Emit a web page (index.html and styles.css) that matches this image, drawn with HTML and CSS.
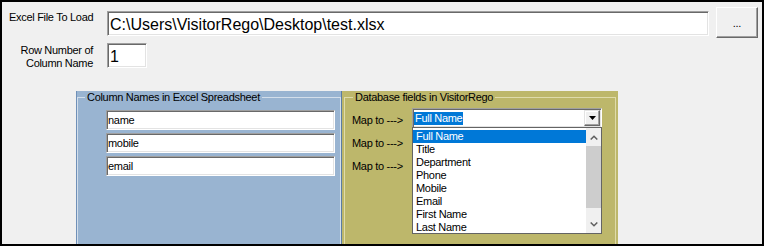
FILE: index.html
```html
<!DOCTYPE html>
<html>
<head>
<meta charset="utf-8">
<link rel="stylesheet" href="styles.css">
</head>
<body>
<div class="win">
  <div class="row row-file">
    <label class="lbl lbl-file">Excel File To Load</label>
    <div class="tb tb-big tb-file">C:\Users\VisitorRego\Desktop\test.xlsx</div>
    <div class="btn">...</div>
  </div>
  <div class="row row-num">
    <label class="lbl lbl-num">Row Number of<br>Column Name</label>
    <div class="tb tb-big tb-num">1</div>
  </div>
  <div class="panels">
    <div class="panel panel-blue">
      <fieldset class="grp grp-blue">
        <legend>Column Names in Excel Spreadsheet</legend>
        <div class="cols">
          <div class="tb tb-col">name</div>
          <div class="tb tb-col">mobile</div>
          <div class="tb tb-col">email</div>
        </div>
      </fieldset>
    </div>
    <div class="panel panel-olive">
      <fieldset class="grp grp-olive">
        <legend>Database fields in VisitorRego</legend>
        <div class="maps">
          <div class="map-row">
            <span class="map-lbl">Map to ---&gt;</span>
            <div class="combo">
              <span class="sel">Full Name</span>
              <span class="ddbtn">
                <svg width="7" height="4" viewBox="0 0 7 4"><polygon points="0,0 7,0 3.5,4" fill="#000"/></svg>
              </span>
              <div class="list">
                <div class="items">
                  <div class="item on">Full Name</div>
                  <div class="item">Title</div>
                  <div class="item">Department</div>
                  <div class="item">Phone</div>
                  <div class="item">Mobile</div>
                  <div class="item">Email</div>
                  <div class="item">First Name</div>
                  <div class="item">Last Name</div>
                </div>
                <div class="sb">
                  <div class="sb-btn sb-up">
                    <svg width="8" height="5" viewBox="0 0 8 5"><polyline points="0.7,4.5 4,1.2 7.3,4.5" fill="none" stroke="#606060" stroke-width="1.5"/></svg>
                  </div>
                  <div class="sb-thumb"></div>
                  <div class="sb-track"></div>
                  <div class="sb-btn sb-dn">
                    <svg width="8" height="5" viewBox="0 0 8 5"><polyline points="0.7,0.5 4,3.8 7.3,0.5" fill="none" stroke="#606060" stroke-width="1.5"/></svg>
                  </div>
                </div>
              </div>
            </div>
          </div>
          <div class="map-row"><span class="map-lbl">Map to ---&gt;</span></div>
          <div class="map-row"><span class="map-lbl">Map to ---&gt;</span></div>
        </div>
      </fieldset>
    </div>
  </div>
</div>
</body>
</html>
```

FILE: styles.css
```css
* { box-sizing: border-box; }
html, body { margin: 0; padding: 0; }
body {
  font-family: "Liberation Sans", Arial, sans-serif;
  font-size: 11px;
  letter-spacing: -0.3px;
  color: #000;
  background: #fff;
}
.win {
  width: 764px;
  height: 246px;
  border: 2px solid #000;
  background: #f0f0f0;
  display: flex;
  flex-direction: column;
  overflow: hidden;
}
.row { display: flex; align-items: flex-start; padding-left: 7px; }
.row-file { margin-top: 5px; }
.row-num { margin-top: 5px; height: 25px; }
.lbl { width: 98px; flex: none; line-height: 13px; }
.lbl-file { margin-top: 4px; }
.lbl-num { text-align: right; padding-right: 14px; margin-top: 1px; }

.tb {
  background: #fff;
  border: 1px solid;
  border-color: #a0a0a0 #fff #fff #a0a0a0;
  box-shadow: inset 1px 1px 0 #696969, inset -1px -1px 0 #e3e3e3;
  white-space: nowrap;
  overflow: hidden;
  flex: none;
}
.tb-big {
  height: 25px;
  font-size: 16px;
  letter-spacing: 0;
  line-height: 21px;
  padding: 2px 0 0 2px;
}
.tb-file { width: 602px; margin-top: 4px; }
.tb-num { width: 40px; }

.btn {
  width: 42px;
  height: 31px;
  margin-left: 7px;
  flex: none;
  background: #f0f0f0;
  border: 1px solid;
  border-color: #fff #696969 #696969 #fff;
  box-shadow: inset -1px -1px 0 #a0a0a0;
  display: flex;
  align-items: center;
  justify-content: center;
  padding-top: 1px;
  line-height: 13px;
}

.panels {
  flex: 1;
  display: flex;
  margin-top: 23px;
  margin-left: 74px;
  min-height: 0;
}
.panel { flex: none; }
.panel-blue {
  width: 266px;
  background: #99b4d1;
  border-left: 1px solid #6f90b8;
  border-right: 1px solid #5b7ca3;
}
.panel-olive {
  width: 276px;
  background: #bdb76b;
  padding: 0 2px 0 2px;
}
.grp {
  margin: 0;
  padding: 0;
  border: 1px solid;
  border-bottom: none;
  min-width: 0;
  height: 100%;
}
.grp legend {
  padding: 0 2px;
  line-height: 13px;
  height: 13px;
}
.grp-blue { border-color: #d3deea; }
.grp-blue legend { margin-left: 7px; }
.grp-olive { border-color: #dfdbab; }
.grp-olive legend { margin-left: 8px; }

.cols {
  display: flex;
  flex-direction: column;
  gap: 3px;
  margin: 6px 0 0 28px;
}
.tb-col {
  width: 229px;
  height: 20px;
  line-height: 16px;
  padding: 1px 0 0 1px;
}

.maps {
  display: flex;
  flex-direction: column;
  gap: 3px;
  margin: 6px 0 0 7px;
}
.map-row { display: flex; align-items: flex-start; height: 20px; }
.map-lbl { width: 60px; flex: none; line-height: 20px; white-space: nowrap; }

.combo {
  position: relative;
  width: 190px;
  height: 20px;
  margin-top: -2px;
  background: #fff;
  border: 1px solid;
  border-color: #a0a0a0 #fff #fff #a0a0a0;
  box-shadow: inset 1px 1px 0 #696969, inset -1px -1px 0 #e3e3e3;
  display: flex;
  align-items: center;
  padding: 0 1px;
}
.sel {
  background: #0078d7;
  color: #fff;
  line-height: 13px;
  padding: 0 1px;
  white-space: nowrap;
}
.ddbtn {
  margin-left: auto;
  width: 16px;
  height: 16px;
  background: #f0f0f0;
  border: 1px solid;
  border-color: #e3e3e3 #696969 #696969 #e3e3e3;
  box-shadow: inset -1px -1px 0 #a0a0a0, inset 1px 1px 0 #fff;
  display: flex;
  align-items: center;
  justify-content: center;
}
.ddbtn svg { display: block; }

.list {
  position: absolute;
  left: -1px;
  top: 18px;
  width: 190px;
  height: 107px;
  background: #fff;
  border: 1px solid #646464;
  display: flex;
  overflow: hidden;
  z-index: 2;
}
.items { flex: 1; padding-top: 2px; min-width: 0; overflow: hidden; }
.item {
  height: 13px;
  line-height: 13px;
  padding-left: 3px;
  white-space: nowrap;
}
.item.on { background: #0078d7; color: #fff; }
.sb {
  width: 15px;
  flex: none;
  display: flex;
  flex-direction: column;
  background: #f0f0f0;
}
.sb-btn {
  display: flex;
  align-items: center;
  justify-content: center;
}
.sb-btn svg { display: block; }
.sb-up { height: 18px; }
.sb-thumb { height: 62px; background: #cdcdcd; }
.sb-track { flex: 1; }
.sb-dn { height: 17px; }
```
